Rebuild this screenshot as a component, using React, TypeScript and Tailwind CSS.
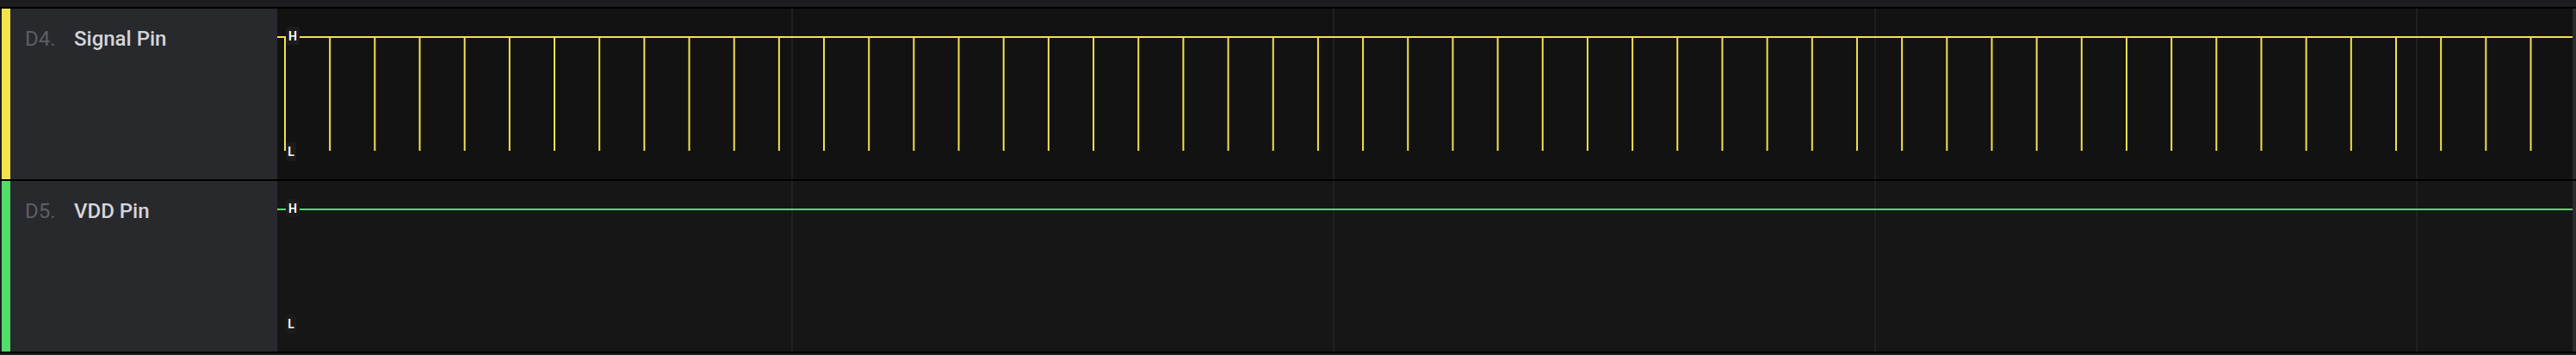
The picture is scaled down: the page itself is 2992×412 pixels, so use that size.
import React from 'react';

interface Channel {
  id: string;
  name: string;
  color: string;
  stripe: string;
  bg: string;
  pulses: boolean;
}

const channels: Channel[] = [
  { id: 'D4.', name: 'Signal Pin', color: '#f3e24c', stripe: 'bg-[#f3e24c]', bg: 'bg-[#121212]', pulses: true },
  { id: 'D5.', name: 'VDD Pin', color: '#52dc6a', stripe: 'bg-[#52dc6a]', bg: 'bg-[#161616]', pulses: false },
];

const WAVE_W = 2666;
const WAVE_H = 198;
const HIGH_Y = 33;
const LOW_Y = 165;
const gridLines = [598, 1227, 1856, 2485];
const pulseXs = Array.from({ length: 51 }, (_, i) => 9 + i * 52.17);

const LevelTag = ({ text, className }: { text: string; className: string }) => (
  <div
    className={`absolute left-[10px] flex items-center justify-center rounded-[3px] bg-[#1c1c1c] px-[2px] text-[14px] font-semibold leading-none text-white ${className}`}
    style={{ fontFamily: 'Roboto, "Liberation Sans", sans-serif' }}
  >
    {text}
  </div>
);

const Waveform = ({ channel }: { channel: Channel }) => (
  <div className={`relative flex-1 ${channel.bg}`}>
    <svg width={WAVE_W} height={WAVE_H} className="block">
      {gridLines.map((x) => (
        <line key={x} x1={x} y1={0} x2={x} y2={WAVE_H} stroke="#25262a" strokeWidth={1.5} />
      ))}
      <line x1={0} y1={HIGH_Y} x2={WAVE_W} y2={HIGH_Y} stroke={channel.color} strokeWidth={2} />
      {channel.pulses &&
        pulseXs.map((x) => (
          <line key={x} x1={x} y1={HIGH_Y} x2={x} y2={LOW_Y} stroke={channel.color} strokeWidth={2} />
        ))}
    </svg>
    <LevelTag text="H" className="top-[21px] h-[21px] w-[16px]" />
    <LevelTag text="L" className="top-[155px] h-[22px] w-[12px]" />
  </div>
);

const ChannelRow = ({ channel }: { channel: Channel }) => (
  <div className="flex h-[200px] border-t-2 border-black">
    <div className="w-[2px] bg-[#1c1d20]" />
    <div className={`w-[10px] ${channel.stripe}`} />
    <div className="flex w-[310px] items-start bg-[#28292d] pl-[17px] pt-[23px] text-[24px] leading-[24px]">
      <span className="w-[57px] text-[#5d5e63]">{channel.id}</span>
      <span className="font-medium text-[#d5d5d9]">{channel.name}</span>
    </div>
    <Waveform channel={channel} />
    <div className="w-[4px] bg-[#2b2c30]" />
  </div>
);

export default function App() {
  return (
    <div
      className="flex h-[412px] w-[2992px] flex-col overflow-hidden bg-[#1e1e20] pt-[8px]"
      style={{ fontFamily: 'Roboto, "Liberation Sans", sans-serif' }}
    >
      {channels.map((c) => (
        <ChannelRow key={c.id} channel={c} />
      ))}
      <div className="h-[2px] bg-black" />
    </div>
  );
}
